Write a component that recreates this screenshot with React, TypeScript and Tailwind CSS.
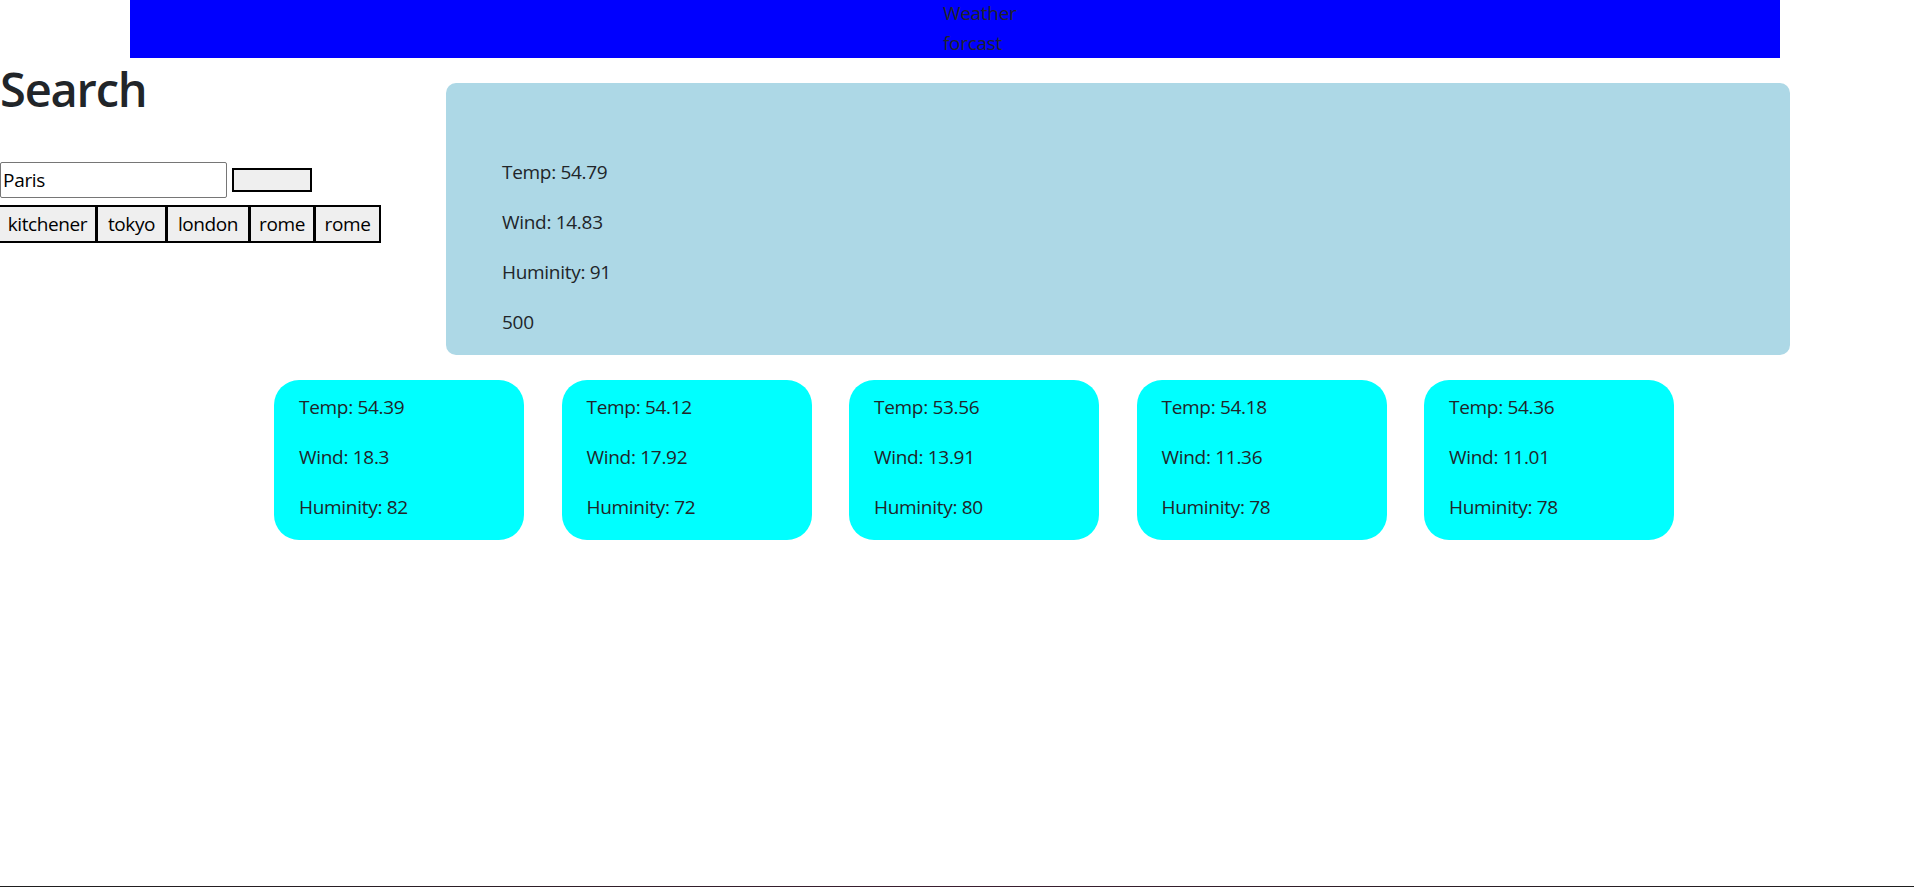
import React from "react";

const forecasts = [
  { temp: "54.39", wind: "18.3", hum: "82" },
  { temp: "54.12", wind: "17.92", hum: "72" },
  { temp: "53.56", wind: "13.91", hum: "80" },
  { temp: "54.18", wind: "11.36", hum: "78" },
  { temp: "54.36", wind: "11.01", hum: "78" },
];

export default function App() {
  return (
    <div className="h-[887px] flex flex-col bg-white text-[#212529] font-['Open_Sans','Noto_Sans',sans-serif] overflow-hidden">
      <header className="ml-[130px] w-[1650px] h-[58px] bg-[#0000ff] shrink-0">
        <div className="pl-[813px] -mt-[2px] text-[19px] leading-[30px] tracking-[-0.3px]">
          <div>Weather</div>
          <div>forcast</div>
        </div>
      </header>

      <div className="flex shrink-0">
        <div className="w-[446px] shrink-0">
          <h1 className="text-[47px] font-semibold leading-[62px] tracking-[-1.2px]">Search</h1>
          <div className="mt-[42px] flex items-center gap-[5px]">
            <input
              defaultValue="Paris"
              className="w-[227px] h-[36px] border border-[#767676] rounded-[2px] bg-white pl-[2px] text-[19px] tracking-[-0.3px] text-black outline-none"
            />
            <button className="w-[80px] h-[24px] border-2 border-black bg-[#efefef]"></button>
          </div>
          <div className="mt-[7px] -ml-[2px] flex h-[38px] text-[19px] tracking-[-0.4px] text-black">
            <button className="w-[99px] h-full border-2 border-black bg-[#efefef] flex items-center justify-center">kitchener</button>
            <button className="-ml-px w-[71px] h-full border-2 border-black bg-[#efefef] flex items-center justify-center">tokyo</button>
            <button className="-ml-px w-[84px] h-full border-2 border-black bg-[#efefef] flex items-center justify-center">london</button>
            <button className="-ml-px w-[66px] h-full border-2 border-black bg-[#efefef] flex items-center justify-center">rome</button>
            <button className="-ml-px w-[67px] h-full border-2 border-black bg-[#efefef] flex items-center justify-center">rome</button>
          </div>
        </div>

        <main className="mt-[25px] w-[1344px] h-[272px] bg-[#add8e6] rounded-[10px] pl-[56px] pt-[74px] text-[19px] leading-[30px] tracking-[-0.3px]">
          <p className="mb-[20px]">Temp: 54.79</p>
          <p className="mb-[20px]">Wind: 14.83</p>
          <p className="mb-[20px]">Huminity: 91</p>
          <p className="mb-[20px]">500</p>
        </main>
      </div>

      <div className="mt-[25px] ml-[274px] flex gap-[37.5px] shrink-0">
        {forecasts.map((f, i) => (
          <div
            key={i}
            className="w-[250px] h-[160px] bg-[#00ffff] rounded-[25px] pl-[25px] pt-[12px] text-[19px] leading-[30px] tracking-[-0.3px]"
          >
            <p className="mb-[20px]">Temp: {f.temp}</p>
            <p className="mb-[20px]">Wind: {f.wind}</p>
            <p className="mb-[20px]">Huminity: {f.hum}</p>
          </div>
        ))}
      </div>

      <div className="mt-auto h-px shrink-0 bg-gradient-to-r from-[#1e1e1e] via-[#3a1e30] to-[#1e1e1e]"></div>
    </div>
  );
}
